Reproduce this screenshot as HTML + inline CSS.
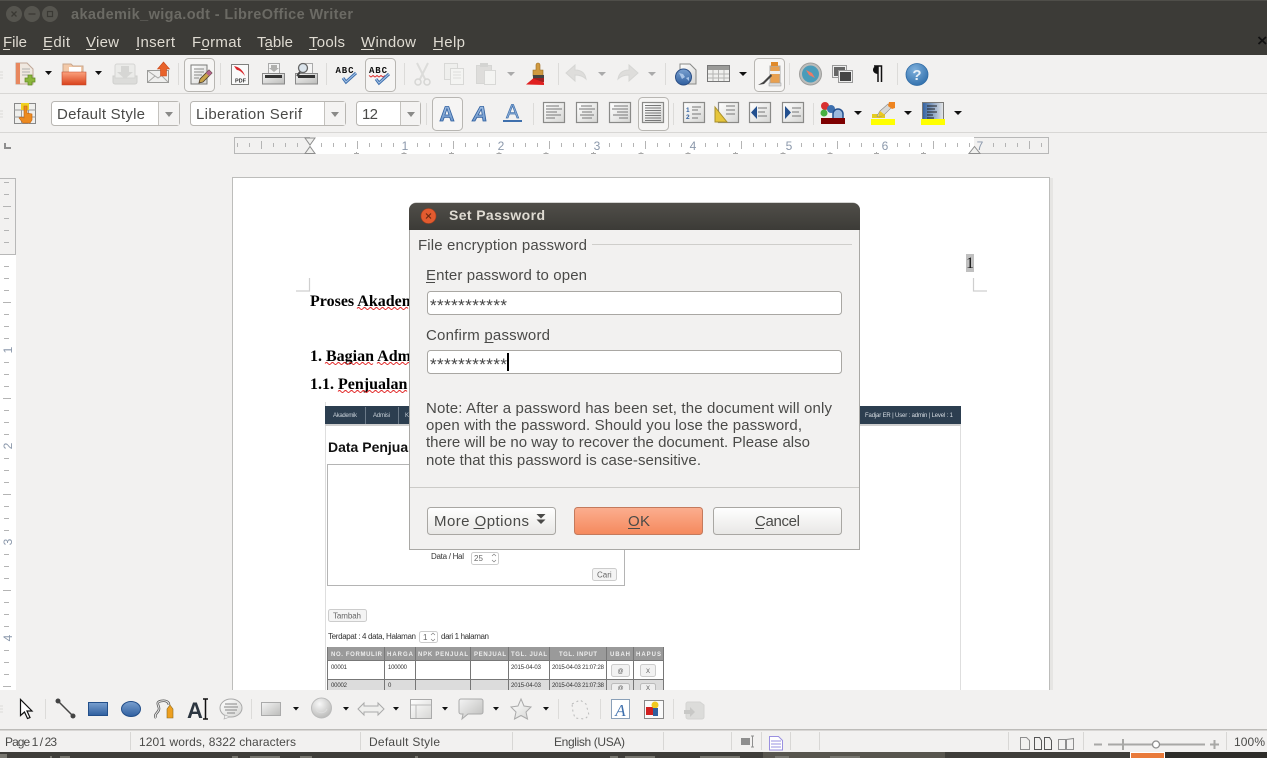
<!DOCTYPE html>
<html><head><meta charset="utf-8"><title>Set Password</title>
<style>
html,body{margin:0;padding:0;background:#f2f1f0;overflow:hidden}
svg{display:block}
.u{font-family:"Liberation Sans",sans-serif;font-size:15px;fill:#4a4a48}
.s{font-family:"Liberation Sans",sans-serif;font-size:12px;fill:#4a4a48}
.m{font-family:"Liberation Sans",sans-serif;font-size:15px;fill:#dfdbd2}
.d{font-family:"Liberation Serif",serif;font-size:16px;font-weight:bold;fill:#000}
.r{font-family:"Liberation Sans",sans-serif;font-size:12px;fill:#8b98ab}
.w{font-family:"Liberation Sans",sans-serif;font-size:6px;fill:#555}
.x{font-family:"Liberation Sans",sans-serif;font-size:8px;fill:#333}
.h{font-family:"Liberation Sans",sans-serif;font-size:6px;font-weight:bold;fill:#eee}
</style></head><body>
<svg xmlns="http://www.w3.org/2000/svg" width="1267" height="758" viewBox="0 0 1267 758">
<defs>
<linearGradient id="gD" x1="0" y1="0" x2="1" y2="1"><stop offset="0" stop-color="#fff"/><stop offset="1" stop-color="#d6d6d4"/></linearGradient>
<linearGradient id="gO" x1="0" y1="0" x2="0" y2="1"><stop offset="0" stop-color="#fba27e"/><stop offset="1" stop-color="#d8401a"/></linearGradient>
<linearGradient id="gB" x1="0" y1="0" x2="0" y2="1"><stop offset="0" stop-color="#7aa0cf"/><stop offset="1" stop-color="#2f5f9f"/></linearGradient>
<linearGradient id="gG" x1="0" y1="0" x2="1" y2="1"><stop offset="0" stop-color="#f4f4f4"/><stop offset="1" stop-color="#bcbcba"/></linearGradient>
<linearGradient id="gT" x1="0" y1="0" x2="0" y2="1"><stop offset="0" stop-color="#504e49"/><stop offset="1" stop-color="#3c3b37"/></linearGradient>
<linearGradient id="gK" x1="0" y1="0" x2="0" y2="1"><stop offset="0" stop-color="#fbae8f"/><stop offset="1" stop-color="#f5895d"/></linearGradient>
<linearGradient id="gC" x1="0" y1="0" x2="0" y2="1"><stop offset="0" stop-color="#fff"/><stop offset="1" stop-color="#e8e7e5"/></linearGradient>
<linearGradient id="gP" x1="0" y1="0" x2="1" y2="0"><stop offset="0" stop-color="#2f5f9f"/><stop offset="1" stop-color="#e8e8e8"/></linearGradient>
<linearGradient id="gA" x1="0" y1="0" x2="0" y2="1"><stop offset="0" stop-color="#a8c4e6"/><stop offset="1" stop-color="#5f8cc4"/></linearGradient>
<radialGradient id="gH" cx=".4" cy=".3" r=".8"><stop offset="0" stop-color="#7fb0dc"/><stop offset="1" stop-color="#2a6aa8"/></radialGradient>
<radialGradient id="gS" cx=".4" cy=".3" r=".8"><stop offset="0" stop-color="#f8f8f8"/><stop offset="1" stop-color="#b4b4b2"/></radialGradient>
</defs>

<!-- base -->
<rect width="1267" height="758" fill="#f2f1f0"/>

<!-- title + menu -->
<rect width="1267" height="55" fill="#3c3b37"/>
<rect width="1267" height="1" fill="#4f4e49"/>
<circle cx="14" cy="14" r="8" fill="#56554f"/><circle cx="32" cy="14" r="8" fill="#56554f"/><circle cx="50" cy="14" r="8" fill="#56554f"/>
<path d="M11.500 11.500l5 5M16.500 11.500l-5 5" stroke="#3a3934" stroke-width="1.300"/><path d="M28.500 14h7" stroke="#3a3934" stroke-width="1.300"/><rect x="47.500" y="11.500" width="5" height="5" fill="none" stroke="#3a3934" stroke-width="1.200"/>
<text x="71" y="19" textLength="282" style="font:bold 14.5px 'Liberation Sans',sans-serif;fill:#6b6a64">akademik_wiga.odt - LibreOffice Writer</text>
<text class="m" x="3" y="47" textLength="24">File</text>
<text class="m" x="43" y="47" textLength="27">Edit</text>
<text class="m" x="86" y="47" textLength="33">View</text>
<text class="m" x="136" y="47" textLength="39">Insert</text>
<text class="m" x="192" y="47" textLength="49">Format</text>
<text class="m" x="257" y="47" textLength="36">Table</text>
<text class="m" x="309" y="47" textLength="36">Tools</text>
<text class="m" x="361" y="47" textLength="55">Window</text>
<text class="m" x="433" y="47" textLength="32">Help</text>
<path d="M3 49.500h7M43 49.500h8M86 49.500h10M136 49.500h3M201 49.500h7M266 49.500h6M309 49.500h8M361 49.500h13M433 49.500h9" stroke="#dfdbd2"/>
<path d="M1258.500 37l7.500 7M1266 37l-7.500 7" stroke="#111" stroke-width="1.800"/>

<!-- toolbars chrome -->
<rect y="93" width="1267" height="1" fill="#d8d7d5"/>
<rect y="132" width="1267" height="1" fill="#d8d7d5"/>
<path d="M178.500 63v22M220.500 63v22M326.500 63v22M404.500 63v22M558.500 63v22M665.500 63v22M789.500 63v22M897.500 63v22M426.500 103v22M533.500 103v22M673.500 103v22M813.500 103v22" stroke="#dcdbd9"/>
<path d="M0 72h3M0 75h3M0 78h3M0 111h3M0 114h3M0 117h3M0 706h3M0 709h3M0 712h3" stroke="#dcdbd9"/>

<!-- new doc -->
<path d="M16 63h11l6 6v15H16z" fill="#f0e8e0" stroke="#c0a898"/><rect x="16" y="63" width="4" height="21" fill="#e8875e"/>
<path d="M22 69h8M22 72h8M22 75h6" stroke="#b0b0ae"/>
<path d="M28 75h4v3h3v4h-3v3h-4v-3h-3v-4h3z" fill="#8cb63c" stroke="#5f8a22" stroke-width=".7"/>
<path d="M45 71h7l-3.500 4z" fill="#111"/>
<!-- open -->
<path d="M63 64h8l2 2h10v6H63z" fill="#f3c9a8" stroke="#c9a68c"/><rect x="69" y="67" width="12" height="6" fill="#fff"/>
<path d="M62 72h24v13H62z" fill="url(#gO)" stroke="#c2492a" stroke-width=".6"/>
<path d="M95 71h7l-3.500 4z" fill="#111"/>
<!-- save -->
<path d="M113 76h24v6a2 2 0 0 1-2 2h-20a2 2 0 0 1-2-2z" fill="#dcdcda" stroke="#cfcfcd"/><path d="M115 66a2 2 0 0 1 2-2h16a2 2 0 0 1 2 2v12h-20z" fill="#ebebe9" stroke="#d5d5d3"/><path d="M121 66h8v6h4l-8 7-8-7h4z" fill="#d6d6d4"/>
<!-- mail -->
<rect x="147.500" y="70.500" width="21" height="12" fill="#efefee" stroke="#9a9a98"/><path d="M148 71l10 7 6-4M148 82l7-6M168 82l-6-6" fill="none" stroke="#a8a8a6"/>
<path d="M163.500 62l6 7h-3v7h-6v-7h-3z" fill="#e8622a" stroke="#c9481a" stroke-width=".6"/>
<!-- edit btn -->
<rect x="184.500" y="58.500" width="30" height="33" rx="4" fill="#f6f5f4" stroke="#b8b6b2"/>
<path d="M191 65h16v19h-16z" fill="url(#gD)" stroke="#7a7a78"/><path d="M194 69h10M194 72h10M194 75h8M194 78h5" stroke="#8a8a88"/>
<path d="M199 83l1-4 9-9 3 3-9 9z" fill="#c9a34a" stroke="#4c3d2a" stroke-width=".8"/><path d="M206 73l3-3 3 3-3 3z" fill="#b2628c"/>
<!-- pdf -->
<rect x="231.500" y="64.500" width="17" height="20" fill="#fafafa" stroke="#7f7f7d"/><path d="M234 66c5 1 9 4 11 10-3-4-6-6-8-6l-1-1z" fill="#d8262a"/>
<text x="235" y="82.500" style="font:bold 5.500px 'Liberation Sans',sans-serif;fill:#333">PDF</text>
<!-- print -->
<rect x="268.500" y="63.500" width="11" height="10" fill="#f4f4f4" stroke="#aaa"/><path d="M271 65h6v3h2l-5 4-5-4h2z" fill="#b0b0ae"/>
<path d="M262.500 73.500h22v10.500h-22z" fill="url(#gG)" stroke="#888"/><rect x="265" y="75" width="17" height="3" fill="#333"/>
<!-- preview -->
<rect x="301.500" y="63.500" width="11" height="10" fill="#f4f4f4" stroke="#aaa"/>
<path d="M295.500 73.500h22v10.500h-22z" fill="url(#gG)" stroke="#888"/><rect x="298" y="75" width="17" height="3" fill="#333"/>
<circle cx="303" cy="68" r="4.500" fill="#dbe4ec" stroke="#666" stroke-width="1.300"/><path d="M300 72l-3 4" stroke="#444" stroke-width="2"/>
<!-- abc -->
<text x="335.500" y="73" textLength="18" style="font:bold 9px 'Liberation Mono',monospace;fill:#111">ABC</text>
<path d="M343 78l3 4 10-9" fill="none" stroke="#3d6fae" stroke-width="3"/><path d="M343 78l3 4 10-9" fill="none" stroke="#a9c5e6" stroke-width="1"/>
<rect x="365.500" y="58.500" width="30" height="33" rx="4" fill="#f6f5f4" stroke="#b8b6b2"/>
<text x="369" y="73" textLength="18" style="font:bold 9px 'Liberation Mono',monospace;fill:#111">ABC</text>
<path d="M369 75.500l2 1.500 2-1.500 2 1.500 2-1.500 2 1.500 2-1.500 2 1.500 2-1.500" fill="none" stroke="#d33" />
<path d="M376 79l3 4 10-9" fill="none" stroke="#3d6fae" stroke-width="3"/><path d="M376 79l3 4 10-9" fill="none" stroke="#a9c5e6" stroke-width="1"/>
<!-- disabled cut copy paste -->
<path d="M417 63l8 16M428 63l-8 16" stroke="#dcdcda" stroke-width="2"/><circle cx="418" cy="82" r="3" fill="none" stroke="#d6d6d4" stroke-width="1.500"/><circle cx="427" cy="82" r="3" fill="none" stroke="#d6d6d4" stroke-width="1.500"/>
<rect x="444.500" y="63.500" width="13" height="16" fill="#efefed" stroke="#d8d8d6"/><rect x="450.500" y="68.500" width="13" height="16" fill="#f4f4f2" stroke="#d8d8d6"/><path d="M453 72h8M453 75h8M453 78h8" stroke="#dededc"/>
<rect x="476.500" y="65.500" width="15" height="18" fill="#dedddb" stroke="#d6d6d4"/><rect x="480" y="63" width="8" height="4" fill="#d4d4d2"/><rect x="484.500" y="70.500" width="11" height="14" fill="#f4f4f2" stroke="#d8d8d6"/>
<path d="M507 72h8l-4 4z" fill="#aaa"/>
<!-- brush -->
<path d="M538 63a2 2 0 0 1 2 2v5h3v6h-10v-6h3v-5a2 2 0 0 1 2-2z" fill="#d09a40" stroke="#9a6c20" stroke-width=".6"/><rect x="533" y="75" width="11" height="3" fill="#444"/><path d="M533 78h11v4h-11z" fill="#a02020"/><path d="M526 84.500l7-6 11 4v2.500z" fill="#e02020"/>
<!-- undo redo -->
<path d="M566 73l9-8v5c6 0 10 3 11 9-3-3-6-4-11-4v6z" fill="#dedddb" stroke="#d6d6d4"/><path d="M598 72h8l-4 4z" fill="#aaa"/>
<path d="M638 73l-9-8v5c-6 0-10 3-11 9 3-3 6-4 11-4v6z" fill="#dedddb" stroke="#d6d6d4"/><path d="M648 72h8l-4 4z" fill="#aaa"/>
<!-- globe doc -->
<path d="M680 64h10l6 6v14h-16z" fill="url(#gD)" stroke="#8a8a88"/><circle cx="683.500" cy="77" r="8" fill="url(#gB)" stroke="#2c4f86"/><path d="M679 73l4 1 2 3-3 2zM686 78l3-1v4z" fill="#a9c4e6"/>
<!-- table -->
<rect x="707.500" y="65.500" width="22" height="16" fill="#f0f0ee" stroke="#777"/><rect x="708" y="66" width="21" height="4" fill="#9a9a98"/><path d="M708 74h21M708 78h21M713 70v11M718.500 70v11M724 70v11" stroke="#b5b5b3"/>
<path d="M739 72h8l-4 4z" fill="#111"/>
<!-- navigator-like -->
<rect x="754.500" y="58.500" width="30" height="33" rx="4" fill="#f6f5f4" stroke="#b8b6b2"/>
<rect x="770" y="66" width="10" height="18" fill="#e8a050" stroke="#aaa"/><rect x="770" y="71" width="10" height="3" fill="#eee"/><rect x="771" y="62" width="7" height="4" fill="#e08a2a"/><rect x="769" y="83" width="12" height="3" fill="#ddd" stroke="#999" stroke-width=".5"/>
<path d="M758 85l5-3 8-8 1 2-8 8z" fill="#444"/>
<!-- compass -->
<circle cx="810.500" cy="74" r="11" fill="#bdbdbb" stroke="#9e9e9c"/><circle cx="810.500" cy="74" r="8.500" fill="#4a9cba"/><path d="M806 70l6 3 3 5-6-3z" fill="#ee7a65"/>
<!-- gallery -->
<rect x="832.500" y="65.500" width="14" height="12" fill="#eee" stroke="#999"/><rect x="834" y="67" width="11" height="9" fill="#666"/><rect x="838.500" y="70.500" width="14" height="12" fill="#eee" stroke="#999"/><rect x="840" y="72" width="11" height="9" fill="#444"/>
<!-- pilcrow -->
<path d="M874 66h7.500v16M878 66v16" fill="none" stroke="#111" stroke-width="1.500"/><path d="M878 66c-4 0-5 2-5 4s2 4 5 4z" fill="#111"/>
<!-- help -->
<circle cx="917" cy="74.500" r="11" fill="url(#gH)" stroke="#2e6aa4" stroke-width=".8"/><text x="917" y="80" text-anchor="middle" style="font:bold 15px 'Liberation Sans',sans-serif;fill:#e8f0f8">?</text>

<!-- format row -->
<rect x="14.500" y="103.500" width="21" height="20" fill="#efefed" stroke="#888"/><path d="M21.500 103v21M28.500 103v21M14 110h22M14 117h22" stroke="#999"/><rect x="21" y="103" width="8" height="7" fill="#f0d020"/><path d="M24 106h3v7l5 1v6l-2 3h-7l-4-5 2-1 3 1z" fill="#ec8a20" stroke="#c06010" stroke-width=".6"/>

<rect x="51.500" y="101.500" width="128" height="24" rx="3" fill="#fff" stroke="#b8b6b2"/><rect x="159" y="102" width="20" height="23" fill="#f4f3f2"/><path d="M158.500 102v23" stroke="#c4c2be"/><path d="M165 112h8l-4 5z" fill="#8a8a88"/>
<text class="u" x="57" y="119" textLength="88">Default Style</text>
<rect x="190.500" y="101.500" width="155" height="24" rx="3" fill="#fff" stroke="#b8b6b2"/><rect x="325" y="102" width="20" height="23" fill="#f4f3f2"/><path d="M324.500 102v23" stroke="#c4c2be"/><path d="M331 112h8l-4 5z" fill="#8a8a88"/>
<text class="u" x="196" y="119" textLength="106">Liberation Serif</text>
<rect x="356.500" y="101.500" width="64" height="24" rx="3" fill="#fff" stroke="#b8b6b2"/><rect x="401" y="102" width="19" height="23" fill="#f4f3f2"/><path d="M400.500 102v23" stroke="#c4c2be"/><path d="M407 112h8l-4 5z" fill="#8a8a88"/>
<text class="u" x="362" y="119" textLength="16">12</text>

<rect x="432.500" y="97.500" width="30" height="33" rx="4" fill="#f6f5f4" stroke="#b8b6b2"/>
<text x="447" y="121" text-anchor="middle" style="font:bold 21px 'Liberation Sans',sans-serif;fill:url(#gA);stroke:#2f5f9f;stroke-width:.8">A</text>
<text x="480" y="121" text-anchor="middle" style="font:italic bold 21px 'Liberation Sans',sans-serif;fill:url(#gA);stroke:#2f5f9f;stroke-width:.8">A</text>
<text x="512.500" y="118" text-anchor="middle" style="font:19px 'Liberation Sans',sans-serif;fill:#8fb0d8;stroke:#3f70ad;stroke-width:.7">A</text><rect x="503" y="120" width="19" height="2" fill="#3f70ad"/>

<g fill="url(#gD)" stroke="#8a8a88" stroke-width="1.200"><rect x="543.500" y="102.500" width="21" height="20"/><rect x="576.500" y="102.500" width="21" height="20"/><rect x="609.500" y="102.500" width="21" height="20"/></g>
<path d="M546 106h13M546 109h16M546 112h11M546 115h15M546 118h9" stroke="#777"/>
<path d="M581 106h11M579 109h16M582 112h10M580 115h14M582 118h10" stroke="#777"/>
<path d="M614 106h14M612 109h16M617 112h11M613 115h15M619 118h9" stroke="#777"/>
<rect x="638.500" y="97.500" width="30" height="33" rx="4" fill="#f6f5f4" stroke="#b8b6b2"/>
<rect x="642.500" y="102.500" width="21" height="20" fill="url(#gD)" stroke="#8a8a88" stroke-width="1.200"/>
<path d="M645 105.500h16M645 108h16M645 110.500h16M645 113h16M645 115.500h16M645 118h16M645 120.500h16" stroke="#777"/>
<g fill="url(#gD)" stroke="#8a8a88" stroke-width="1.200"><rect x="683.500" y="102.500" width="21" height="20"/><rect x="718.500" y="102.500" width="20" height="20"/><rect x="749.500" y="102.500" width="21" height="20"/><rect x="782.500" y="102.500" width="21" height="20"/></g>
<path d="M692 107h9M692 110h6M692 114h9M692 118h6M726 106h9M726 110h9M726 114h9M758 108h9M758 112h7M758 116h9M792 108h9M792 112h7M792 116h9" stroke="#777"/>
<text x="686" y="112" style="font:bold 6.500px 'Liberation Sans',sans-serif;fill:#2f5f9f">1</text><text x="686" y="119" style="font:bold 6.500px 'Liberation Sans',sans-serif;fill:#2f5f9f">2</text>
<path d="M715 107l12 15h-12z" fill="#e6c63c" stroke="#a88f2a"/>
<path d="M757 106v13l-6-6.500z" fill="#23508f"/><path d="M785 106v13l6-6.500z" fill="#23508f"/>
<rect x="821" y="118" width="24" height="6" fill="#7e0000"/><circle cx="825" cy="106" r="4" fill="#d83030"/><circle cx="824" cy="113" r="3.500" fill="#48b040"/><circle cx="831" cy="109" r="4" fill="#3d6fae"/><path d="M833 118v-4a5 5 0 0 1 10 0v4" fill="#9bb8dc" stroke="#23508f" stroke-width="1.500"/>
<path d="M854 111h8l-4 4z" fill="#111"/>
<rect x="871" y="119" width="24" height="6" fill="#ff0" /><rect x="872" y="114" width="13" height="4" fill="#e4cc20"/><path d="M877 116l3-5 8-7 4 3-8 8-5 2z" fill="#d8d8d6" stroke="#888" stroke-width=".6"/><path d="M878 117l2-6 5 4z" fill="#ecc820"/><path d="M889 102h6v6l-3 1-4-3z" fill="#ee8420"/>
<path d="M904 111h8l-4 4z" fill="#111"/>
<rect x="922.500" y="102.500" width="21" height="17" fill="url(#gP)" stroke="#7a7a78"/><path d="M927 106h10M927 109h8M927 112h10M927 115h6M927 118h7" stroke="#222"/><rect x="921" y="119" width="24" height="6" fill="#ff0"/>
<path d="M954 111h8l-4 4z" fill="#111"/>

<!-- rulers -->
<path d="M4 143h2v4h5v2H4z" fill="#8e8e8e"/>
<rect x="310" y="137" width="664" height="17" fill="#fff"/>
<path d="M234.500 137.500H310M234.500 153.500H310M234.500 137v17M974 137.500h74.500V153.500H974" fill="none" stroke="#b8b8b8"/>
<path d="M225 145h824" stroke="#b4b4b4" stroke-width="4" stroke-dasharray="1 11 1 11 1 23 1 11 1 11 1 23" />
<path d="M261 145h788" stroke="#b4b4b4" stroke-width="8" stroke-dasharray="1 95"/>
<rect x="222" y="137" width="12" height="17" fill="#f2f1f0"/>
<rect x="1049" y="137" width="10" height="17" fill="#f2f1f0"/>
<text class="r" x="405" y="150" text-anchor="middle">1</text><text class="r" x="501" y="150" text-anchor="middle">2</text><text class="r" x="597" y="150" text-anchor="middle">3</text><text class="r" x="693" y="150" text-anchor="middle">4</text><text class="r" x="789" y="150" text-anchor="middle">5</text><text class="r" x="885" y="150" text-anchor="middle">6</text><text class="r" x="980" y="150" text-anchor="middle">7</text>
<path d="M305 138h10l-5 7zM305 153.500h10l-5-7z" fill="#f0f0ee" stroke="#8e8e8e"/>
<path d="M969 153.500h11l-5.500-7z" fill="#f0f0ee" stroke="#8e8e8e"/>
<path d="M451.500 152v2M449 153.500h5M499 152v2M496.500 153.500h5M546 152v2M543.500 153.500h5M593.500 152v2M591 153.500h5M641 152v2M638.500 153.500h5M688 152v2M685.500 153.500h5M735.500 152v2M733 153.500h5M783 152v2M780.500 153.500h5M830 152v2M827.500 153.500h5M876.500 152v2M874 153.500h5M923.500 152v2M921 153.500h5M404 152v2M401.500 153.500h5M356.500 152v2M354 153.500h5" stroke="#a8a8a8"/>

<rect x="0" y="254" width="16" height="436" fill="#fff"/>
<path d="M0 178.500h15.500v76H0" fill="none" stroke="#b8b8b8"/>
<path d="M6.500 170v520" stroke="#b4b4b4" stroke-width="5" stroke-dasharray="1 11 1 11 1 23 1 11 1 11 1 23"/>
<path d="M7 206v484" stroke="#b4b4b4" stroke-width="8" stroke-dasharray="1 95"/>
<rect x="0" y="166" width="16" height="12" fill="#f2f1f0"/>
<text class="r" transform="translate(12,350) rotate(-90)" text-anchor="middle">1</text>
<text class="r" transform="translate(12,446) rotate(-90)" text-anchor="middle">2</text>
<text class="r" transform="translate(12,542) rotate(-90)" text-anchor="middle">3</text>
<text class="r" transform="translate(12,638) rotate(-90)" text-anchor="middle">4</text>

<!-- page -->
<rect x="1050" y="178" width="3" height="512" fill="#e6e5e3"/>
<rect x="232.500" y="177.500" width="817" height="520" fill="#fff" stroke="#bdbdbb"/>
<path d="M309.500 278v13H296M973.500 278v13H987" fill="none" stroke="#cfcfcf" stroke-width="1.200"/>
<rect x="966" y="254" width="8" height="18" fill="#c0c0c0"/>
<text x="966" y="268" style="font:16px 'Liberation Serif',serif;fill:#111">1</text>
<text class="d" x="310" y="306">Proses Akadem</text>
<text class="d" x="310" y="361">1. Bagian Admi</text>
<text class="d" x="310" y="389">1.1. Penjualan</text>
<path d="M357 308.500q1.500-2 3 0t3 0 3 0 3 0 3 0 3 0 3 0 3 0 3 0 3 0 3 0 3 0 3 0 3 0 3 0 3 0 3 0M325 363.500q1.500-2 3 0t3 0 3 0 3 0 3 0 3 0 3 0 3 0 3 0 3 0 3 0 3 0 3 0 3 0 3 0 3 0M377 363.500q1.500-2 3 0t3 0 3 0 3 0 3 0 3 0 3 0 3 0 3 0 3 0 3 0M338 391.500q1.500-2 3 0t3 0 3 0 3 0 3 0 3 0 3 0 3 0 3 0 3 0 3 0 3 0 3 0 3 0 3 0 3 0 3 0 3 0 3 0 3 0 3 0 3 0 3 0" fill="none" stroke="#e02020" stroke-width=".9"/>

<!-- embedded screenshot -->
<path d="M325.500 402v288M960.500 406v284" stroke="#dedede"/>
<rect x="325" y="406" width="636" height="18" fill="#2c3e50"/>
<rect x="325" y="424" width="636" height="2" fill="#cfcfcf"/>
<path d="M365.500 407v17M398.500 407v17" stroke="#6b7a89"/>
<text class="w" x="333" y="417" style="fill:#c8d0d8" textLength="24">Akademik</text>
<text class="w" x="373" y="417" style="fill:#c8d0d8" textLength="17">Admisi</text>
<text class="w" x="405" y="417" style="fill:#c8d0d8">K</text>
<text class="w" x="865" y="417" style="fill:#d8dee4" textLength="88">Fadjar ER | User : admin | Level : 1</text>
<text x="328" y="452" style="font:bold 14px 'Liberation Sans',sans-serif;fill:#111">Data Penjualan</text>
<rect x="327.500" y="464.500" width="297" height="121" fill="#fff" stroke="#b4b4b4"/>
<text class="x" x="431" y="559" textLength="33">Data / Hal</text>
<rect x="471.500" y="552.500" width="27" height="12" rx="2" fill="#fff" stroke="#ccc"/><text class="x" x="474" y="561" style="fill:#666">25</text><path d="M492 556l2-2 2 2M492 560l2 2 2-2" fill="none" stroke="#777" stroke-width=".6"/>
<rect x="592.500" y="568.500" width="24" height="12" rx="2" fill="#f4f4f4" stroke="#ccc"/><text class="x" x="597" y="577.500" style="fill:#666">Cari</text>
<rect x="328.500" y="609.500" width="38" height="12" rx="2" fill="#f4f4f4" stroke="#ccc"/><text class="x" x="333" y="618.500" style="fill:#666" textLength="28">Tambah</text>
<text class="x" x="328" y="639" textLength="88">Terdapat : 4 data, Halaman</text>
<rect x="419.500" y="631.500" width="18" height="11" rx="2" fill="#fff" stroke="#ccc"/><text class="x" x="423" y="640" style="fill:#666">1</text><path d="M431 635l2-2 2 2M431 639l2 2 2-2" fill="none" stroke="#777" stroke-width=".6"/>
<text class="x" x="441" y="639" textLength="48">dari 1 halaman</text>
<rect x="327" y="647" width="337" height="14" fill="#9a9a9a"/>
<rect x="327" y="680" width="337" height="10" fill="#dcdcdc"/>
<rect x="327" y="661" width="337" height="19" fill="#fff"/>
<path d="M327.500 647v43M384.500 647v43M415.500 647v43M470.500 647v43M508.500 647v43M549.500 647v43M606.500 647v43M633.500 647v43M663.500 647v43M327 660.500h337M327 679.500h337" stroke="#777"/>
<g>
<text class="h" x="331" y="656" textLength="51">NO. FORMULIR</text><text class="h" x="387" y="656" textLength="26">HARGA</text><text class="h" x="418" y="656" textLength="50">NPK PENJUAL</text><text class="h" x="474" y="656" textLength="32">PENJUAL</text><text class="h" x="511" y="656" textLength="36">TGL. JUAL</text><text class="h" x="559" y="656" textLength="38">TGL. INPUT</text><text class="h" x="610" y="656" textLength="20">UBAH</text><text class="h" x="636" y="656" textLength="25">HAPUS</text>
<text class="w" x="331" y="669" textLength="16" style="fill:#333">00001</text><text class="w" x="388" y="669" textLength="19" style="fill:#333">100000</text><text class="w" x="511" y="669" textLength="30" style="fill:#333">2015-04-03</text><text class="w" x="552" y="669" textLength="52" style="fill:#333">2015-04-03 21:07:28</text>
<text class="w" x="331" y="687" textLength="16" style="fill:#333">00002</text><text class="w" x="388" y="687" style="fill:#333">0</text><text class="w" x="511" y="687" textLength="30" style="fill:#333">2015-04-03</text><text class="w" x="552" y="687" textLength="52" style="fill:#333">2015-04-03 21:07:38</text>
</g>
<rect x="611.500" y="664.500" width="18" height="12" rx="2" fill="#f2f2f2" stroke="#ccc"/><text class="w" x="617.500" y="673" style="fill:#555">@</text>
<rect x="640.500" y="664.500" width="15" height="12" rx="2" fill="#f2f2f2" stroke="#ccc"/><text class="w" x="646" y="673" style="fill:#555">X</text>
<rect x="611.500" y="683.500" width="18" height="10" rx="2" fill="#eee" stroke="#bbb"/><text class="w" x="617.500" y="690" style="fill:#555">@</text>
<rect x="640.500" y="683.500" width="15" height="10" rx="2" fill="#eee" stroke="#bbb"/><text class="w" x="646" y="690" style="fill:#555">X</text>

<!-- bottom toolbars cover -->
<rect y="690" width="1267" height="68" fill="#f2f1f0"/>
<rect y="729" width="1267" height="1.500" fill="#bdbcb9"/>
<path d="M0 706h3M0 709h3M0 712h3" stroke="#dcdbd9"/>
<path d="M45.500 699v20M251.500 699v20M558.500 699v20M600.500 699v20M673.500 699v20" stroke="#dcdbd9"/>
<!-- draw icons -->
<path d="M20.500 699.500v16l4-3.500 3 6.500 2.500-1-3-6.500h5z" fill="#fff" stroke="#111" stroke-width="1.200"/>
<path d="M58 701l15 15" stroke="#444" stroke-width="1.500"/><circle cx="58" cy="701" r="2.500" fill="#444"/><circle cx="73" cy="716" r="2.500" fill="#444"/>
<rect x="88.500" y="702.500" width="19" height="13" fill="url(#gB)" stroke="#234f8a"/>
<ellipse cx="131" cy="709" rx="9.500" ry="7.500" fill="url(#gB)" stroke="#234f8a"/>
<path d="M156 718c-3-4 4-6 3-10s-3-6 2-7 8 1 8 4" fill="none" stroke="#555" stroke-width="2.500"/><path d="M156 718c-3-4 4-6 3-10s-3-6 2-7 8 1 8 4" fill="none" stroke="#eee" stroke-width="1"/><path d="M170 705l3 4v9h-6v-9z" fill="#eea020" stroke="#8a6a20" stroke-width=".6"/>
<text x="187" y="718" style="font:bold 22px 'Liberation Sans',sans-serif;fill:#2c3640" textLength="15">A</text><path d="M203 699h5M203 719h5M205.500 699v20" stroke="#111" stroke-width="1.500" fill="none"/>
<ellipse cx="231" cy="708" rx="11" ry="9" fill="url(#gD)" stroke="#aaa"/><path d="M225 704h12M224 707h14M225 710h12M227 713h8" stroke="#888"/><path d="M225 715l-1 4 6-2z" fill="#eee" stroke="#aaa" stroke-width=".6"/>
<rect x="261.500" y="702.500" width="19" height="13" fill="url(#gG)" stroke="#aaa"/><path d="M293 707h6l-3 3.500z" fill="#111"/>
<circle cx="321.500" cy="708" r="10" fill="url(#gS)" stroke="#bbb"/><path d="M316 709c2 5 9 5 11 0" fill="none" stroke="#ddd"/><path d="M343 707h6l-3 3.500z" fill="#111"/>
<path d="M358 709l6-6v3h14v-3l6 6-6 6v-3h-14v3z" fill="#efefed" stroke="#aaa"/><path d="M393 707h6l-3 3.500z" fill="#111"/>
<rect x="410.500" y="699.500" width="21" height="19" fill="url(#gD)" stroke="#aaa"/><path d="M411 705h20M416 705v13" stroke="#bbb"/><path d="M442 707h6l-3 3.500z" fill="#111"/>
<path d="M461 699h20a2 2 0 0 1 2 2v11a2 2 0 0 1-2 2h-13l-6 5 1-5h-2a2 2 0 0 1-2-2v-11a2 2 0 0 1 2-2z" fill="url(#gG)" stroke="#aaa"/><path d="M493 707h6l-3 3.500z" fill="#111"/>
<path d="M521 699l3 7 7 1-5 5 1.500 7-6.500-3.500-6.500 3.500 1.500-7-5-5 7-1z" fill="url(#gD)" stroke="#aaa"/><path d="M543 707h6l-3 3.500z" fill="#111"/>
<path d="M572 704l8-4 6 4 3 11-4 4-10-1-2-6z" fill="none" stroke="#bbb" stroke-dasharray="2 3"/>
<rect x="611.500" y="699.500" width="18" height="19" fill="#fff" stroke="#8aa0b8"/><text x="620.500" y="716" text-anchor="middle" style="font:italic 17px 'Liberation Serif',serif;fill:#3f70ad">A</text>
<rect x="644.500" y="700.500" width="19" height="18" fill="#fafafa" stroke="#888"/><rect x="646" y="707" width="9" height="8" fill="#d02020"/><circle cx="655" cy="705" r="3.500" fill="#f0c820"/><rect x="653" y="708" width="5" height="8" fill="#2f5f9f"/>
<path d="M686 704a2 2 0 0 1 2-2h12l4 3v12a2 2 0 0 1-2 2h-14a2 2 0 0 1-2-2z" fill="#dcdcda" stroke="#d4d4d2"/><path d="M684 710h6v-3l5 5-5 5v-3h-6z" fill="#c8c8c6"/>

<!-- status -->
<path d="M130.500 732v18M360.500 732v18M512.500 732v18M663.500 732v18M731.500 732v18M761.500 732v18M790.500 732v18M819.500 732v18M1008.500 732v18M1083.500 732v18M1226.500 732v18" stroke="#d8d7d5"/>
<text class="s" x="5" y="746" textLength="52">Page 1 / 23</text>
<text class="s" x="139" y="746" textLength="157">1201 words, 8322 characters</text>
<text class="s" x="369" y="746" textLength="71">Default Style</text>
<text class="s" x="554" y="746" textLength="71">English (USA)</text>
<rect x="741" y="738" width="9" height="7" fill="#8e8e8e"/><path d="M751 736h3M751 747h3M752.500 736v11" stroke="#8e8e8e"/>
<path d="M769.500 736.500h9l4 4v9.500h-13z" fill="#fff" stroke="#9a90e0"/><path d="M771 741h10M771 744h10M771 747h10" stroke="#9a90e0"/>
<path d="M1020.500 737.500h6l3 3v9h-9z" fill="#f2f1f0" stroke="#8e8e8e"/>
<path d="M1034.500 737.500h5l2 3v9h-7zM1044.500 737.500h5l2 3v9h-7z" fill="#f2f1f0" stroke="#555"/>
<path d="M1058.500 739.500h7v10h-7zM1066.500 739.500l7-1v11h-7z" fill="#f2f1f0" stroke="#8e8e8e"/>
<path d="M1094 744.500h8M1108 744.500h97M1123 739v11M1210 744.500h9M1214.500 740v9" stroke="#a8a8a6" stroke-width="2"/>
<circle cx="1156" cy="744.500" r="3.500" fill="#fff" stroke="#8e8e8e" stroke-width="1.300"/>
<text class="s" x="1234" y="746" textLength="31">100%</text>

<!-- taskbar -->
<rect y="752" width="1267" height="6" fill="#3e3d39"/>
<rect x="763" y="752" width="182" height="6" fill="#57554e"/>
<rect x="1130" y="752" width="35" height="6" fill="#fff"/><rect x="1131" y="753" width="33" height="5" fill="#e97a3a"/>
<rect x="1165" y="752" width="102" height="6" fill="#2e2d2a"/>
<rect x="0" y="754" width="7" height="4" fill="#77766f"/>
<path d="M50 757h2M60 757h10M232 757h6M250 757h30M300 757h12M415 757h3M610 757h8M625 757h30M700 757h40M775 757h14M830 757h30" stroke="#77766f" stroke-width="2"/>

<!-- dialog -->
<path d="M409.500 210a7 7 0 0 1 7-7h436a7 7 0 0 1 7 7v339.500h-450z" fill="#f2f1f0" stroke="#a9a8a5"/>
<path d="M409 230v-20a7 7 0 0 1 7-7h437a7 7 0 0 1 7 7v20z" fill="url(#gT)"/>
<circle cx="428.500" cy="216" r="7.500" fill="#e25b2f" stroke="#a93f1c" stroke-width=".6"/><path d="M426 213.500l5 5M431 213.500l-5 5" stroke="#6e2a12" stroke-width="1.200"/>
<text x="449" y="220" textLength="96" style="font:bold 14px 'Liberation Sans',sans-serif;fill:#dfdbd2">Set Password</text>
<text class="u" x="418" y="250" textLength="169">File encryption password</text>
<path d="M592 244.500h260" stroke="#cfcecb"/>
<text class="u" x="426" y="280" textLength="161">Enter password to open</text>
<path d="M426 282.500h9" stroke="#4a4a48"/>
<rect x="427.500" y="291.500" width="414" height="23" rx="3" fill="#fff" stroke="#a9a7a3"/>
<text x="430" y="311" textLength="77" style="font:17px 'Liberation Sans',sans-serif;fill:#444">***********</text>
<text class="u" x="426" y="340" textLength="124">Confirm password</text>
<path d="M484.500 342.500h9" stroke="#4a4a48"/>
<rect x="427.500" y="350.500" width="414" height="23" rx="3" fill="#fff" stroke="#a9a7a3"/>
<text x="430" y="370" textLength="77" style="font:17px 'Liberation Sans',sans-serif;fill:#444">***********</text>
<rect x="507" y="353" width="2" height="18" fill="#000"/>
<text class="u" x="426" y="413" textLength="406">Note: After a password has been set, the document will only</text>
<text class="u" x="426" y="430" textLength="376">open with the password. Should you lose the password,</text>
<text class="u" x="426" y="447" textLength="384">there will be no way to recover the document. Please also</text>
<text class="u" x="426" y="465" textLength="275">note that this password is case-sensitive.</text>
<path d="M410 487.500h449" stroke="#cccbc8"/>
<rect x="427.500" y="507.500" width="128" height="27" rx="3" fill="url(#gC)" stroke="#a9a7a3"/>
<text class="u" x="434" y="526" textLength="95">More Options</text>
<path d="M473.500 528.500h11" stroke="#4a4a48"/>
<path d="M536.500 514h9l-4.500 4.500zM536.500 519.500h9l-4.500 4.500z" fill="#4a4a48"/>
<rect x="574.500" y="507.500" width="128" height="27" rx="3" fill="url(#gK)" stroke="#c47a5c"/>
<text class="u" x="628" y="526" textLength="22">OK</text>
<path d="M628 528.500h12" stroke="#4a4a48"/>
<rect x="713.500" y="507.500" width="128" height="27" rx="3" fill="url(#gC)" stroke="#a9a7a3"/>
<text class="u" x="755" y="526" textLength="45">Cancel</text>
<path d="M755 528.500h9" stroke="#4a4a48"/>
</svg>
</body></html>
